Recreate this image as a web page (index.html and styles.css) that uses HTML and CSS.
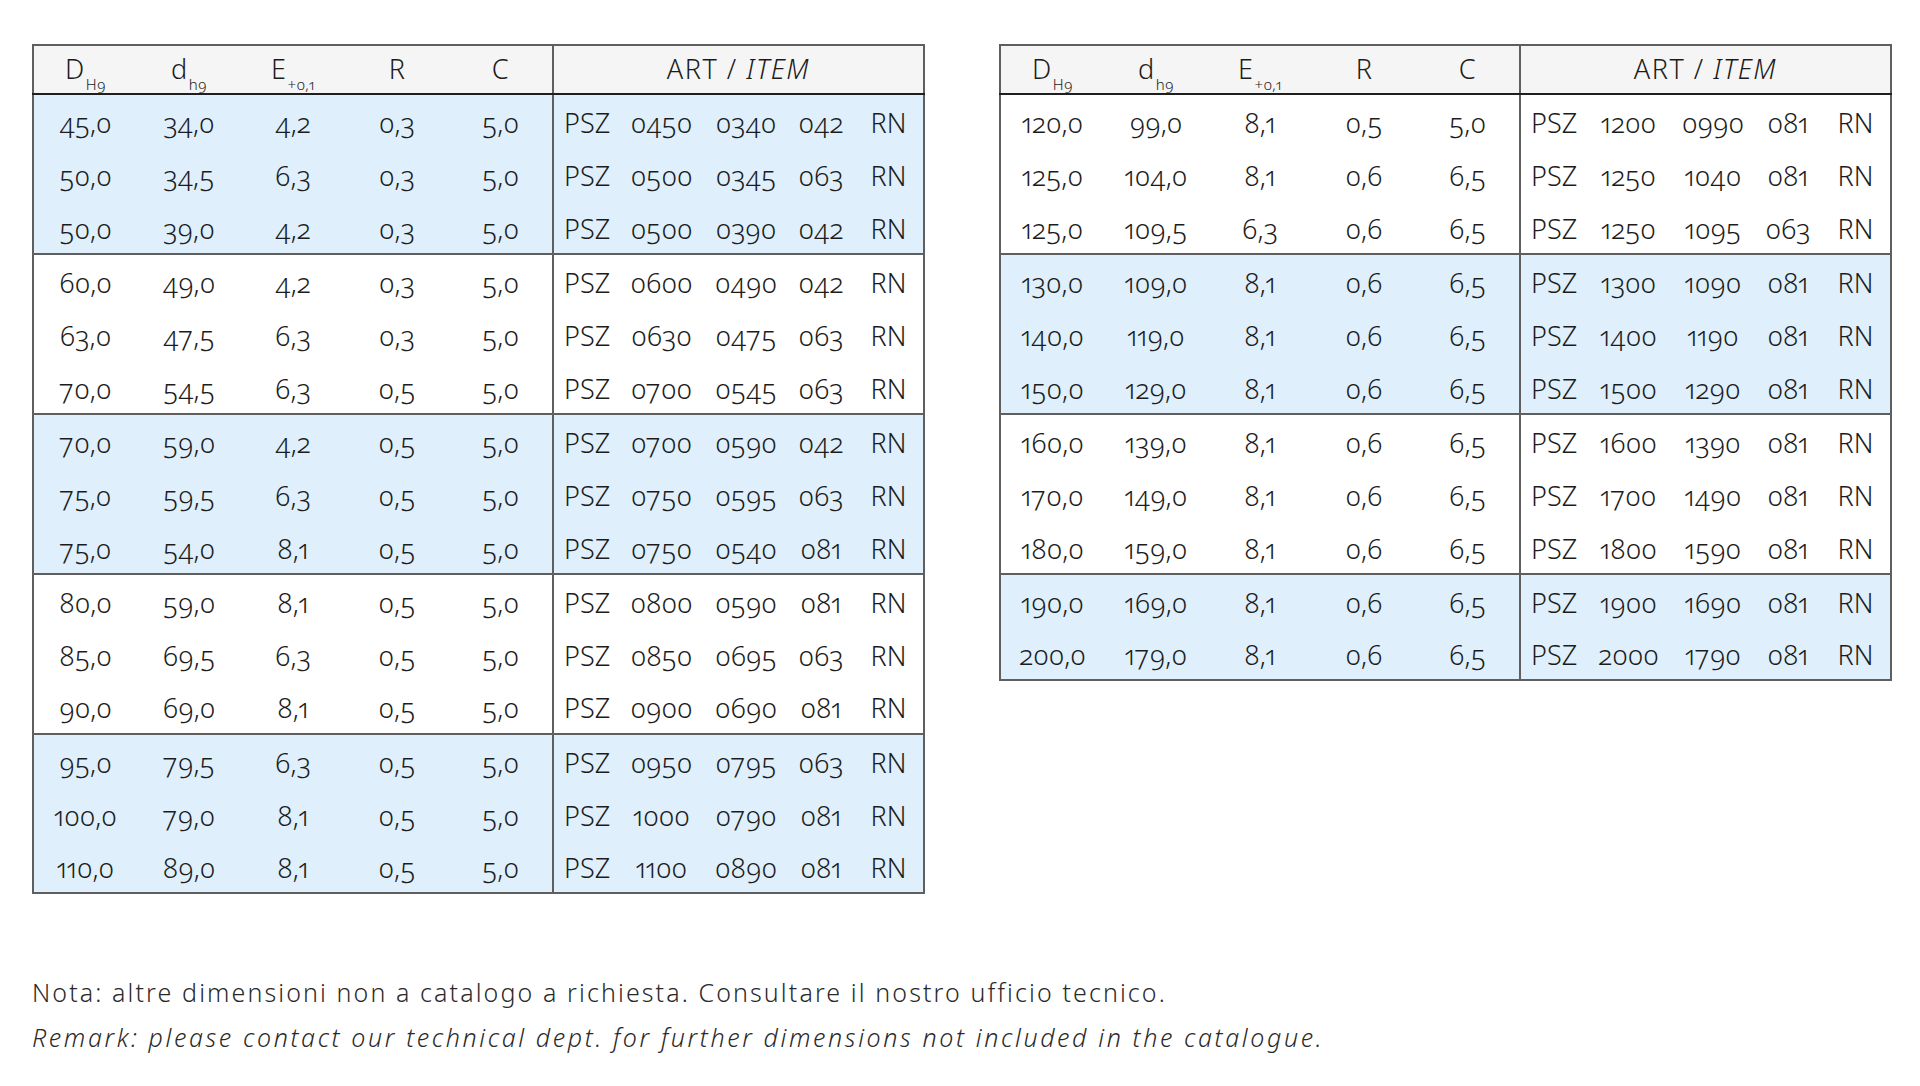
FILE: index.html
```html
<!DOCTYPE html>
<html lang="it">
<head>
<meta charset="utf-8">
<title>PSZ</title>
<link rel="stylesheet" href="styles.css">
</head>
<body>
<div class="page">
  <div class="tables">
    <table class="spec">
      <colgroup><col class="c"><col class="c"><col class="c"><col class="c"><col class="c"><col class="art"></colgroup>
      <thead>
        <tr><th>D<span class="sub">H9</span></th><th>d<span class="sub">h9</span></th><th>E<span class="sub">+0,1</span></th><th>R</th><th>C</th><th class="arth">ART / <i>ITEM</i></th></tr>
      </thead>
      <tbody class="blue">
        <tr><td>45,0</td><td>34,0</td><td>4,2</td><td>0,3</td><td>5,0</td><td class="code"><div class="cg"><span>PSZ</span><span>0450</span><span>0340</span><span>042</span><span>RN</span></div></td></tr>
        <tr><td>50,0</td><td>34,5</td><td>6,3</td><td>0,3</td><td>5,0</td><td class="code"><div class="cg"><span>PSZ</span><span>0500</span><span>0345</span><span>063</span><span>RN</span></div></td></tr>
        <tr><td>50,0</td><td>39,0</td><td>4,2</td><td>0,3</td><td>5,0</td><td class="code"><div class="cg"><span>PSZ</span><span>0500</span><span>0390</span><span>042</span><span>RN</span></div></td></tr>
      </tbody>
      <tbody>
        <tr><td>60,0</td><td>49,0</td><td>4,2</td><td>0,3</td><td>5,0</td><td class="code"><div class="cg"><span>PSZ</span><span>0600</span><span>0490</span><span>042</span><span>RN</span></div></td></tr>
        <tr><td>63,0</td><td>47,5</td><td>6,3</td><td>0,3</td><td>5,0</td><td class="code"><div class="cg"><span>PSZ</span><span>0630</span><span>0475</span><span>063</span><span>RN</span></div></td></tr>
        <tr><td>70,0</td><td>54,5</td><td>6,3</td><td>0,5</td><td>5,0</td><td class="code"><div class="cg"><span>PSZ</span><span>0700</span><span>0545</span><span>063</span><span>RN</span></div></td></tr>
      </tbody>
      <tbody class="blue">
        <tr><td>70,0</td><td>59,0</td><td>4,2</td><td>0,5</td><td>5,0</td><td class="code"><div class="cg"><span>PSZ</span><span>0700</span><span>0590</span><span>042</span><span>RN</span></div></td></tr>
        <tr><td>75,0</td><td>59,5</td><td>6,3</td><td>0,5</td><td>5,0</td><td class="code"><div class="cg"><span>PSZ</span><span>0750</span><span>0595</span><span>063</span><span>RN</span></div></td></tr>
        <tr><td>75,0</td><td>54,0</td><td>8,1</td><td>0,5</td><td>5,0</td><td class="code"><div class="cg"><span>PSZ</span><span>0750</span><span>0540</span><span>081</span><span>RN</span></div></td></tr>
      </tbody>
      <tbody>
        <tr><td>80,0</td><td>59,0</td><td>8,1</td><td>0,5</td><td>5,0</td><td class="code"><div class="cg"><span>PSZ</span><span>0800</span><span>0590</span><span>081</span><span>RN</span></div></td></tr>
        <tr><td>85,0</td><td>69,5</td><td>6,3</td><td>0,5</td><td>5,0</td><td class="code"><div class="cg"><span>PSZ</span><span>0850</span><span>0695</span><span>063</span><span>RN</span></div></td></tr>
        <tr><td>90,0</td><td>69,0</td><td>8,1</td><td>0,5</td><td>5,0</td><td class="code"><div class="cg"><span>PSZ</span><span>0900</span><span>0690</span><span>081</span><span>RN</span></div></td></tr>
      </tbody>
      <tbody class="blue">
        <tr><td>95,0</td><td>79,5</td><td>6,3</td><td>0,5</td><td>5,0</td><td class="code"><div class="cg"><span>PSZ</span><span>0950</span><span>0795</span><span>063</span><span>RN</span></div></td></tr>
        <tr><td>100,0</td><td>79,0</td><td>8,1</td><td>0,5</td><td>5,0</td><td class="code"><div class="cg"><span>PSZ</span><span>1000</span><span>0790</span><span>081</span><span>RN</span></div></td></tr>
        <tr><td>110,0</td><td>89,0</td><td>8,1</td><td>0,5</td><td>5,0</td><td class="code"><div class="cg"><span>PSZ</span><span>1100</span><span>0890</span><span>081</span><span>RN</span></div></td></tr>
      </tbody>
    </table>

    <table class="spec">
      <colgroup><col class="c"><col class="c"><col class="c"><col class="c"><col class="c"><col class="art"></colgroup>
      <thead>
        <tr><th>D<span class="sub">H9</span></th><th>d<span class="sub">h9</span></th><th>E<span class="sub">+0,1</span></th><th>R</th><th>C</th><th class="arth">ART / <i>ITEM</i></th></tr>
      </thead>
      <tbody>
        <tr><td>120,0</td><td>99,0</td><td>8,1</td><td>0,5</td><td>5,0</td><td class="code"><div class="cg"><span>PSZ</span><span>1200</span><span>0990</span><span>081</span><span>RN</span></div></td></tr>
        <tr><td>125,0</td><td>104,0</td><td>8,1</td><td>0,6</td><td>6,5</td><td class="code"><div class="cg"><span>PSZ</span><span>1250</span><span>1040</span><span>081</span><span>RN</span></div></td></tr>
        <tr><td>125,0</td><td>109,5</td><td>6,3</td><td>0,6</td><td>6,5</td><td class="code"><div class="cg"><span>PSZ</span><span>1250</span><span>1095</span><span>063</span><span>RN</span></div></td></tr>
      </tbody>
      <tbody class="blue">
        <tr><td>130,0</td><td>109,0</td><td>8,1</td><td>0,6</td><td>6,5</td><td class="code"><div class="cg"><span>PSZ</span><span>1300</span><span>1090</span><span>081</span><span>RN</span></div></td></tr>
        <tr><td>140,0</td><td>119,0</td><td>8,1</td><td>0,6</td><td>6,5</td><td class="code"><div class="cg"><span>PSZ</span><span>1400</span><span>1190</span><span>081</span><span>RN</span></div></td></tr>
        <tr><td>150,0</td><td>129,0</td><td>8,1</td><td>0,6</td><td>6,5</td><td class="code"><div class="cg"><span>PSZ</span><span>1500</span><span>1290</span><span>081</span><span>RN</span></div></td></tr>
      </tbody>
      <tbody>
        <tr><td>160,0</td><td>139,0</td><td>8,1</td><td>0,6</td><td>6,5</td><td class="code"><div class="cg"><span>PSZ</span><span>1600</span><span>1390</span><span>081</span><span>RN</span></div></td></tr>
        <tr><td>170,0</td><td>149,0</td><td>8,1</td><td>0,6</td><td>6,5</td><td class="code"><div class="cg"><span>PSZ</span><span>1700</span><span>1490</span><span>081</span><span>RN</span></div></td></tr>
        <tr><td>180,0</td><td>159,0</td><td>8,1</td><td>0,6</td><td>6,5</td><td class="code"><div class="cg"><span>PSZ</span><span>1800</span><span>1590</span><span>081</span><span>RN</span></div></td></tr>
      </tbody>
      <tbody class="blue">
        <tr><td>190,0</td><td>169,0</td><td>8,1</td><td>0,6</td><td>6,5</td><td class="code"><div class="cg"><span>PSZ</span><span>1900</span><span>1690</span><span>081</span><span>RN</span></div></td></tr>
        <tr><td>200,0</td><td>179,0</td><td>8,1</td><td>0,6</td><td>6,5</td><td class="code"><div class="cg"><span>PSZ</span><span>2000</span><span>1790</span><span>081</span><span>RN</span></div></td></tr>
      </tbody>
    </table>
  </div>

  <div class="notes">
    <p class="note">Nota: altre dimensioni non a catalogo a richiesta. Consultare il nostro ufficio tecnico.</p>
    <p class="note remark">Remark: please contact our technical dept. for further dimensions not included in the catalogue.</p>
  </div>
</div>
</body>
</html>
```

FILE: styles.css
```css
html, body {
  margin: 0;
  padding: 0;
  background: #ffffff;
}

body {
  font-family: "Noto Sans", "Open Sans", "Liberation Sans", sans-serif;
  font-weight: 300;
  font-stretch: 90%;
  color: #1c1c1c;
  font-variant-numeric: oldstyle-nums proportional-nums;
  font-feature-settings: "onum" 1, "pnum" 1;
}

.page {
  padding: 44px 0 0 32px;
}

.tables {
  display: flex;
  align-items: flex-start;
  gap: 74px;
}

.spec {
  border-collapse: collapse;
  table-layout: fixed;
  width: 891px;
  border: 2px solid #5f5f5f;
}

.spec col.c {
  width: 104px;
}

.spec col.art {
  width: 371px;
}

.spec thead th {
  background: #f5f5f5;
  height: 44px;
  padding: 0 0 3px;
  font-weight: 300;
  font-size: 27px;
  letter-spacing: 0.5px;
  border-bottom: 2px solid #1f1f1f;
  text-align: center;
  vertical-align: middle;
  white-space: nowrap;
}

.spec thead th .sub {
  font-size: 15px;
  position: relative;
  top: 11px;
  margin-left: 1px;
  letter-spacing: 0.3px;
}

.spec thead th.arth {
  border-left: 2px solid #5f5f5f;
  letter-spacing: 1.5px;
}

.spec tbody {
  border-top: 2px solid #5f5f5f;
}

.spec tbody.blue {
  background: #dff0fc;
}

.spec tbody tr {
  height: 53.3px;
}

.spec td {
  padding: 3px 0 0;
  font-size: 27px;
  text-align: center;
  vertical-align: middle;
  white-space: nowrap;
}

.spec td.code {
  border-left: 2px solid #5f5f5f;
  text-align: left;
}

.cg {
  display: grid;
  grid-template-columns: 62px 91px 78px 72px 63px;
  align-items: baseline;
}

.cg span {
  text-align: center;
}

.cg span:first-child {
  text-align: left;
  padding-left: 10px;
}

.notes {
  margin-top: 76px;
}

.note {
  margin: 0;
  font-size: 25px;
  line-height: 45px;
  letter-spacing: 2.1px;
  color: #2a2a2a;
}

.remark {
  font-style: italic;
  letter-spacing: 2.62px;
}
```
